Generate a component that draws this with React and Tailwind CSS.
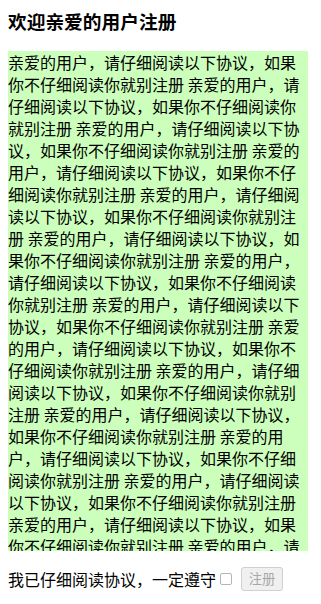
const unit = "亲爱的用户，请仔细阅读以下协议，如果你不仔细阅读你就别注册";
const agreement = Array.from({ length: 16 }, () => unit).join(" ");

export default function App() {
  return (
    <div
      className="min-h-[604px] bg-white px-2 text-black"
      style={{ fontFamily: '"Noto Sans CJK SC", "Noto Sans", sans-serif' }}
    >
      <h3 className="pt-[10px] text-[18.72px] font-bold leading-[22px]">
        欢迎亲爱的用户注册
      </h3>
      <div className="mt-[19px] h-[500px] w-[300px] overflow-hidden bg-[#ccffbb] text-[16px] leading-[22px]">
        {agreement}
      </div>
      <div className="mt-4 flex h-6 items-center text-[16px]">
        <span>我已仔细阅读协议，一定遵守</span>
        <span className="ml-1 mr-[9px] h-[12px] w-[12px] rounded-[2px] border border-[#b5b5b5] bg-white" />
        <button
          disabled
          className="h-6 w-[42px] rounded-[3px] border border-[#d0d0d0] bg-[#f0f0f0] text-[13.33px] text-[#a8a8a8]"
        >
          注册
        </button>
      </div>
    </div>
  );
}
